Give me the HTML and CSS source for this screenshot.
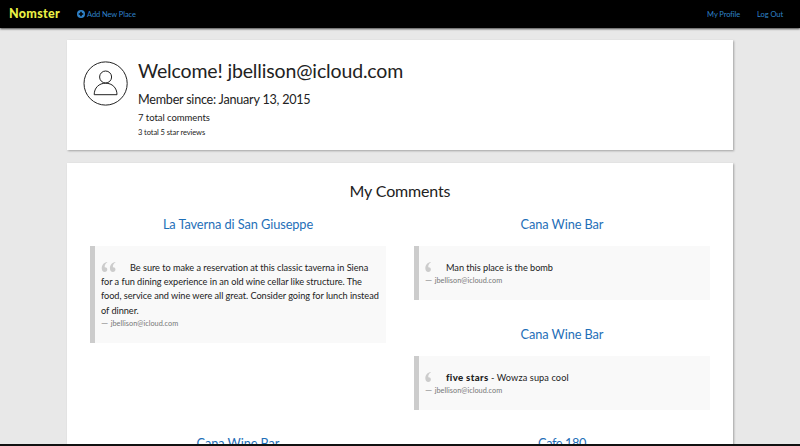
FILE: index.html
```html
<!DOCTYPE html>
<html lang="en">
<head>
<meta charset="utf-8">
<title>Nomster</title>
<link rel="stylesheet" href="styles.css">
</head>
<body>
<nav class="navbar">
  <a class="brand">Nomster</a>
  <a class="add"><svg class="plus" viewBox="0 0 16 16"><circle cx="8" cy="8" r="8" fill="currentColor"/><path d="M8 3.500v9M3.500 8h9" stroke="#000" stroke-width="3.200"/></svg><span>Add New Place</span></a>
  <div class="account"><a>My Profile</a><a>Log Out</a></div>
</nav>
<main>
  <section class="card welcome">
    <svg class="avatar" viewBox="0 0 46 46" fill="none" stroke="#222" stroke-width="1"><circle cx="22.600" cy="22.500" r="21.600"/><circle cx="22.600" cy="16" r="6"/><path d="M11.200 33.700C11.200 26.700 16.100 22.200 22.600 22.200s11.400 4.500 11.400 11.500z"/></svg>
    <div class="info">
      <h1>Welcome! jbellison@icloud.com</h1>
      <h3>Member since: January 13, 2015</h3>
      <h4>7 total comments</h4>
      <h5>3 total 5 star reviews</h5>
    </div>
  </section>
  <section class="card comments">
    <h2>My Comments</h2>
    <div class="columns">
      <div class="column">
        <article class="comment tall">
          <a class="place">La Taverna di San Giuseppe</a>
          <blockquote>
            <p><svg class="mark double" viewBox="0 0 16 11"><path d="M6 0C2.500.5 0 3.200 0 6.800 0 9.300 1.300 11 3.300 11 5 11 6.100 9.900 6.100 8.300 6.100 6.700 5 5.700 3.300 5.800 3 3.500 4.200 1.500 6 .6z"/><path transform="translate(9 0)" d="M6 0C2.500.5 0 3.200 0 6.800 0 9.300 1.300 11 3.300 11 5 11 6.100 9.900 6.100 8.300 6.100 6.700 5 5.700 3.300 5.800 3 3.500 4.200 1.500 6 .6z"/></svg>Be sure to make a reservation at this classic taverna in Siena<br>for a fun dining experience in an old wine cellar like structure. The<br>food, service and wine were all great. Consider going for lunch instead<br>of dinner.</p>
            <small><i class="dash">—</i> jbellison@icloud.com</small>
          </blockquote>
        </article>
        <article class="comment"><a class="place">Cana Wine Bar</a></article>
      </div>
      <div class="column">
        <article class="comment">
          <a class="place">Cana Wine Bar</a>
          <blockquote>
            <p><svg class="mark single" viewBox="0 0 7 11"><path d="M6 0C2.500.5 0 3.200 0 6.800 0 9.300 1.300 11 3.300 11 5 11 6.100 9.900 6.100 8.300 6.100 6.700 5 5.700 3.300 5.800 3 3.500 4.200 1.500 6 .6z"/></svg>Man this place is the bomb</p>
            <small><i class="dash">—</i> jbellison@icloud.com</small>
          </blockquote>
        </article>
        <article class="comment">
          <a class="place">Cana Wine Bar</a>
          <blockquote>
            <p class="rated"><svg class="mark single" viewBox="0 0 7 11"><path d="M6 0C2.500.5 0 3.200 0 6.800 0 9.300 1.300 11 3.300 11 5 11 6.100 9.900 6.100 8.300 6.100 6.700 5 5.700 3.300 5.800 3 3.500 4.200 1.500 6 .6z"/></svg><b>five stars</b> - Wowza supa cool</p>
            <small><i class="dash">—</i> jbellison@icloud.com</small>
          </blockquote>
        </article>
        <article class="comment"><a class="place cafe">Cafe 180</a></article>
      </div>
    </div>
  </section>
</main>
<div class="edge"></div>
</body>
</html>
```
FILE: styles.css
```css
* { box-sizing: border-box; }
body { margin: 0; height: 446px; overflow: hidden; background: #e8e8e8; color: #222; font-family: Lato, "Open Sans", sans-serif; white-space: nowrap; }
h1, h2, h3, h4, h5, p, blockquote { margin: 0; font-weight: 400; }
.navbar { height: 28px; display: flex; align-items: center; padding: 0 17px 0 9px; background: #000; box-shadow: 0 1px 2px rgba(0,0,0,.7); color: #2f82c9; font-size: 7.500px; letter-spacing: -.08px; }
.brand { width: 68px; padding-bottom: 1px; color: #eaf045; font-size: 12.500px; font-weight: 900; letter-spacing: .32px; }
.add { display: flex; align-items: center; gap: 2px; }
.plus { width: 8px; height: 8px; margin-top: -1px; }
.account { margin-left: auto; display: flex; gap: 17px; }
.card { width: 666px; margin: 0 auto 12.500px 67px; background: #fff; box-shadow: 1px 1px 2px rgba(0,0,0,.3); }
main { padding-top: 12px; }
.welcome { height: 110px; display: flex; padding: 20px 16px; }
.avatar { width: 46px; height: 46px; margin: 1px 9px 0 0; }
h1 { font-size: 19.500px; line-height: 22px; letter-spacing: -.15px; }
h3 { font-size: 12.600px; line-height: 16px; margin-top: 10px; letter-spacing: -.23px; }
h4 { font-size: 9.500px; line-height: 12px; margin-top: 4px; letter-spacing: -.05px; }
h5 { font-size: 7.500px; line-height: 10px; margin-top: 4px; letter-spacing: -.08px; }
.comments { height: 283.500px; margin-bottom: 0; padding: 18.500px 23px 0; overflow: hidden; }
h2 { font-size: 16px; line-height: 20px; text-align: center; letter-spacing: -.15px; }
.columns { display: grid; grid-template-columns: 296px 296px; gap: 28px; padding-top: 14px; }
.comment { height: 109.500px; }
.comment.tall { height: 218.700px; }
.place { display: block; height: 31px; color: #1f6fb8; font-size: 12.800px; line-height: 18px; text-align: center; letter-spacing: -.1px; }
.cafe { letter-spacing: -.45px; }
blockquote { border-left: 5px solid #ccc; background: #f9f9f9; padding: 15px 6px 13px; font-size: 9.200px; line-height: 14.200px; letter-spacing: -.04px; }
.rated { letter-spacing: .1px; }
blockquote b { font-size: 9.600px; font-weight: 900; letter-spacing: .35px; }
.mark { fill: #ccc; height: 10px; margin-right: 13px; vertical-align: -1px; }
.double { width: 16px; }
.single { width: 7px; margin-right: 14px; }
small { display: block; color: #777; font-size: 7.300px; line-height: 12px; letter-spacing: .03px; }
.dash { display: inline-block; font-style: normal; transform: scaleX(1.250); transform-origin: left; margin-right: 2px; }
.edge { position: fixed; left: 0; right: 0; bottom: 0; height: 2px; background: #111; }
```
